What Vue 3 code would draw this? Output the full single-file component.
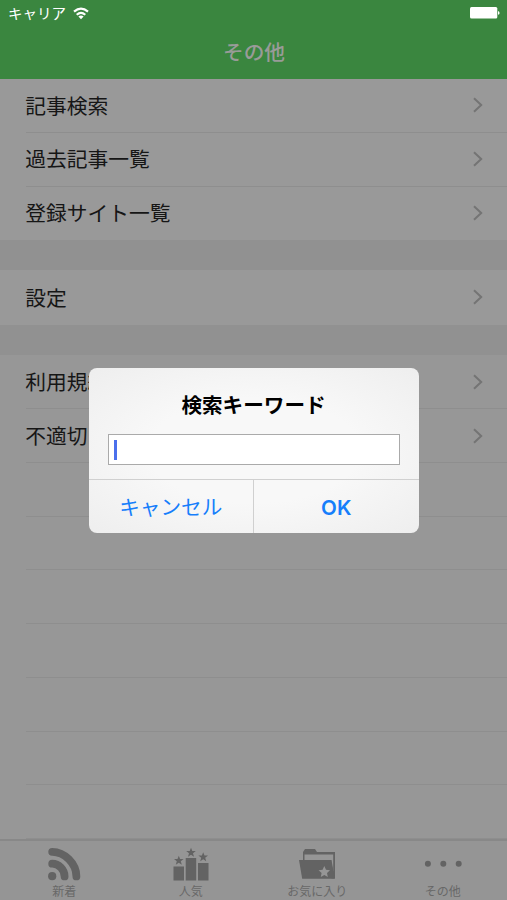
<script setup>
const sections = [
  ['記事検索', '過去記事一覧', '登録サイト一覧'],
  ['設定'],
  ['利用規約', '不適切な記事の報告'],
]
const emptyRows = 7
</script>

<template>
  <div class="screen">
    <header class="header">
      <div class="status">
        <span class="carrier">キャリア</span>
        <svg class="wifi" width="16" height="13" viewBox="0 0 16 13">
          <path d="M1 4.7Q8-1.3 15 4.7" fill="none" stroke="#fff" stroke-width="2.2" />
          <path d="M3.7 7.8Q8 4.1 12.3 7.8" fill="none" stroke="#fff" stroke-width="2.1" />
          <path d="M5.4 9.6Q8 7.5 10.6 9.6L8 12.2Z" fill="#fff" />
        </svg>
        <svg class="battery" width="30" height="12" viewBox="0 0 30 12">
          <rect width="27.3" height="11.6" rx="1.5" fill="#fff" />
          <path d="M28 4Q29.6 4.4 29.6 5.9Q29.6 7.4 28 7.8Z" fill="#fff" />
        </svg>
      </div>
      <h1 class="title">その他</h1>
    </header>

    <main class="list">
      <section v-for="(rows, i) in sections" :key="i" class="section">
        <div v-for="row in rows" :key="row" class="row">
          <span>{{ row }}</span>
          <svg class="chevron" width="12" height="18" viewBox="0 0 12 18">
            <path d="M2 2.3L9.2 9L2 15.7" fill="none" stroke="#747474" stroke-width="2" />
          </svg>
        </div>
      </section>
      <div v-for="n in emptyRows" :key="n" class="row empty"></div>
    </main>

    <nav class="tabs">
      <div class="tab">
        <svg width="36" height="36" viewBox="0 0 36 36">
          <g fill="none" stroke="#636363" stroke-width="7.8" stroke-linecap="round">
            <path d="M6.2 5.8C18.5 5.8 30.4 17.5 30.4 30.4" />
            <path d="M6.2 17.7C12.8 17.7 18.6 23.8 18.6 30.4" />
          </g>
          <circle cx="6.2" cy="30.2" r="4.1" fill="#636363" />
        </svg>
        <span>新着</span>
      </div>
      <div class="tab">
        <svg width="36" height="36" viewBox="0 0 36 36">
          <defs>
            <path id="star" d="M0-4.8L1.3-1.5L4.8-1.4L2 .8L3 4.2L0 2.2L-3 4.2L-2 .8L-4.8-1.4L-1.3-1.5Z" />
          </defs>
          <g fill="#636363">
            <rect x="0.5" y="20.5" width="10.5" height="14" />
            <rect x="12.7" y="12" width="10.5" height="22.5" />
            <rect x="25" y="17" width="10.5" height="17.5" />
            <use href="#star" x="5.8" y="14.5" />
            <use href="#star" x="18" y="6.5" />
            <use href="#star" x="30.2" y="11" />
          </g>
        </svg>
        <span>人気</span>
      </div>
      <div class="tab">
        <svg width="38" height="36" viewBox="0 0 38 36">
          <path d="M5 17V6L7 3H17L19 6H37V32.5H34" fill="#636363" />
          <path d="M6.5 14V8.5H35.2V26L33 14Z" fill="#969696" />
          <path d="M1 14H33.5L36.7 32.8H4.2Z" fill="#636363" />
          <path d="M26.3 20L28 23.7L32 24.2L29 26.9L29.8 31L26.3 28.9L22.8 31L23.6 26.9L20.6 24.2L24.6 23.7Z" fill="#969696" />
        </svg>
        <span>お気に入り</span>
      </div>
      <div class="tab more">
        <svg width="40" height="36" viewBox="0 0 40 36">
          <g fill="#636363">
            <circle cx="4.9" cy="17.8" r="3" />
            <circle cx="20.3" cy="17.8" r="3" />
            <circle cx="35.7" cy="17.8" r="3" />
          </g>
        </svg>
        <span>その他</span>
      </div>
    </nav>

    <div class="overlay">
      <div class="dialog">
        <h2>検索キーワード</h2>
        <div class="field"><i class="caret"></i></div>
        <div class="actions">
          <div class="action">キャンセル</div>
          <div class="action ok">OK</div>
        </div>
      </div>
    </div>
  </div>
</template>

<style>
body {
  margin: 0;
}
</style>

<style scoped>
.screen {
  position: relative;
  display: flex;
  flex-direction: column;
  width: 507px;
  height: 900px;
  overflow: hidden;
  background: #979797;
  color: #161616;
  font-family: "Noto Sans CJK JP", sans-serif;
  font-size: 20.75px;
}
.header {
  box-sizing: border-box;
  height: 79px;
  flex: none;
  background: #3a863f;
}
.status {
  display: flex;
  align-items: center;
  height: 26px;
  padding: 0 7px 0 8px;
  color: #fff;
  font-size: 14.5px;
  line-height: 26px;
}
.wifi {
  margin-left: 7px;
}
.battery {
  margin-left: auto;
}
.title {
  margin: 0;
  text-align: center;
  color: #999b98;
  font-size: 20.7px;
  font-weight: 500;
  line-height: 51px;
  padding-left: 1px;
}
.list {
  flex: 1;
  min-height: 0;
  overflow: hidden;
}
.section {
  background: #999;
}
.section:nth-child(3) {
  background: #979797;
}
.section + .section {
  padding-top: 0.7px;
  border-top: 30px solid #919191;
}
.row {
  box-sizing: border-box;
  display: flex;
  align-items: center;
  justify-content: space-between;
  height: 53.75px;
  margin-left: 26px;
  padding-right: 23px;
  border-bottom: 1px solid #8e8e8e;
}
.row span {
  margin: -1.4px 0 0 -0.7px;
}
.section:not(:nth-child(3)) .row:last-child {
  border-bottom-color: transparent;
}
.tabs {
  box-sizing: border-box;
  display: flex;
  flex: none;
  height: 61px;
  padding: 5px 0 0 1px;
  border-top: 2px solid #888;
  background: #959595;
}
.tab {
  flex: 1;
  display: flex;
  flex-direction: column;
  align-items: center;
  color: #686868;
  font-size: 12px;
  line-height: 18px;
}
.more > * {
  margin-right: 2px;
}
.tab svg {
  flex: none;
}
.overlay {
  position: absolute;
  inset: 0;
  display: flex;
  align-items: center;
  justify-content: center;
}
.dialog {
  box-sizing: border-box;
  display: flex;
  flex-direction: column;
  width: 330px;
  height: 165px;
  margin-top: 1px;
  overflow: hidden;
  border-radius: 8px;
  background: radial-gradient(ellipse at center, #f8f8f8 45%, #eeeeee 100%);
}
.dialog h2 {
  flex: none;
  margin: 0;
  padding-top: 16px;
  text-align: center;
  color: #000;
  font-size: 20.6px;
  font-weight: 700;
  line-height: 40px;
}
.field {
  box-sizing: border-box;
  display: flex;
  flex: none;
  align-items: center;
  height: 31px;
  margin: 10px 19px 0;
  padding-left: 5px;
  border: 1px solid #aaa;
  background: #fff;
}
.caret {
  width: 3px;
  height: 20px;
  background: #4b70ec;
}
.actions {
  display: flex;
  flex: 1;
  min-height: 0;
  margin-top: 14px;
  border-top: 1px solid #d0d0d0;
}
.action {
  flex: 1;
  text-align: center;
  color: #167efb;
  line-height: 53px;
  font-size: 20.6px;
}
.ok {
  border-left: 1px solid #d0d0d0;
  font-family: Inter, sans-serif;
  font-weight: 600;
  line-height: 55px;
}
</style>
